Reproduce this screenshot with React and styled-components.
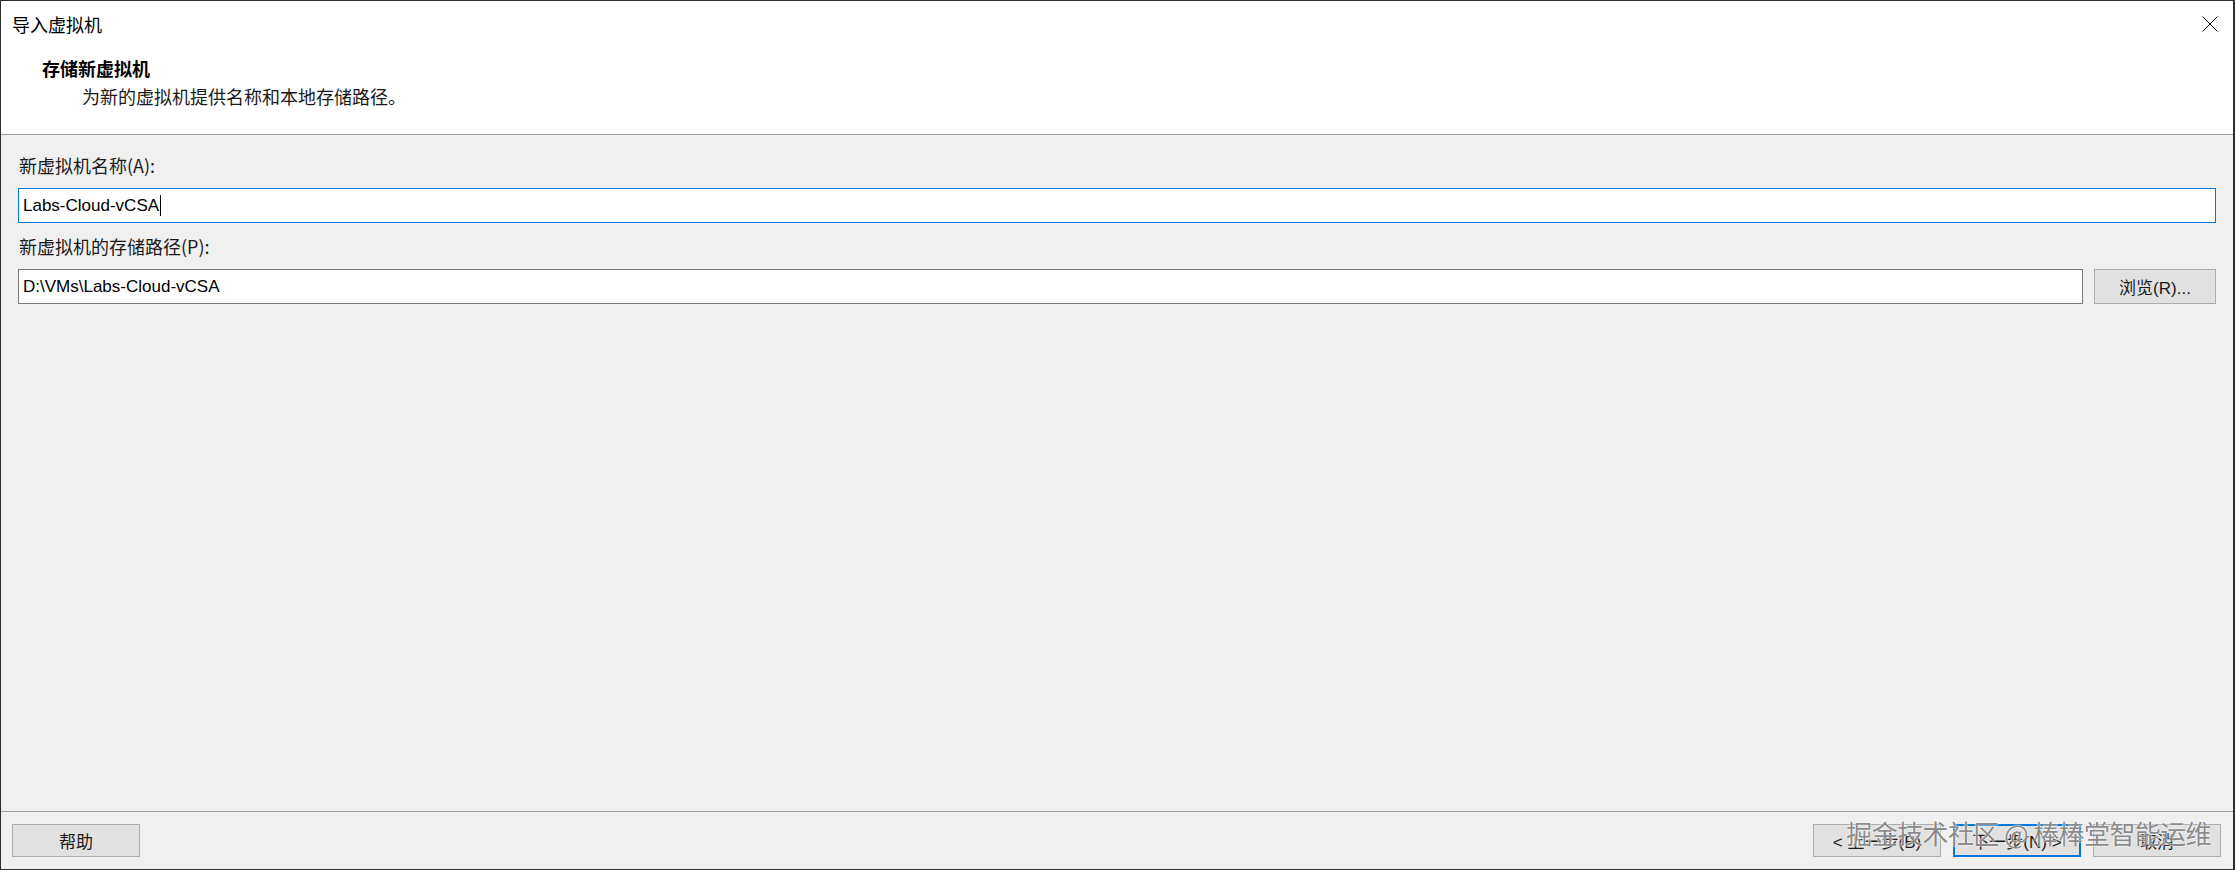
import React from "react";
import styled, { createGlobalStyle } from "styled-components";

const GlobalStyle = createGlobalStyle`
  * {
    box-sizing: border-box;
  }

  body {
    margin: 0;
    overflow: hidden;
    background: #ffffff;
    font-family: "Liberation Sans", "Noto Sans CJK SC", sans-serif;
  }
`;

const ImportWizard = () => {
  return (
    <>
      <GlobalStyle />
      <Window>
        <TitleBar>
          <Title>导入虚拟机</Title>
          <CloseButton aria-label="关闭">
            <svg width="16" height="16" viewBox="0 0 16 16">
              <path d="M0.5 0.5 L15.5 15.5 M15.5 0.5 L0.5 15.5" stroke="#000" strokeWidth="1" fill="none" />
            </svg>
          </CloseButton>
        </TitleBar>

        <Header>
          <Heading>存储新虚拟机</Heading>
          <SubHeading>为新的虚拟机提供名称和本地存储路径。</SubHeading>
        </Header>

        <Body>
          <Label>新虚拟机名称(A):</Label>
          <Field>
            <TextBox focused>
              Labs-Cloud-vCSA
              <Caret />
            </TextBox>
          </Field>

          <Label>新虚拟机的存储路径(P):</Label>
          <Field>
            <TextBox>D:\VMs\Labs-Cloud-vCSA</TextBox>
            <Button width="122px">浏览(R)...</Button>
          </Field>
        </Body>

        <Footer>
          <Button width="128px">帮助</Button>
          <ButtonGroup>
            <Button width="128px">&lt; 上一步(B)</Button>
            <Button width="128px" primary>
              下一步(N) &gt;
            </Button>
            <Button width="128px">取消</Button>
          </ButtonGroup>
        </Footer>

        <Watermark>掘金技术社区 @ 棒棒堂智能运维</Watermark>
      </Window>
    </>
  );
};

const Window = styled.div`
  position: relative;
  display: flex;
  flex-direction: column;
  width: 2235px;
  height: 870px;
  border-top: 1px solid #2d2d2d;
  border-left: 1px solid #2d2d2d;
  border-right: 2px solid #2d2d2d;
  border-bottom: 1px solid #2d2d2d;
  background: #f0f0f0;
  overflow: hidden;
`;

const TitleBar = styled.div`
  display: flex;
  align-items: center;
  justify-content: space-between;
  height: 46px;
  padding: 0 15px 0 11px;
  background: #ffffff;
`;

const Title = styled.div`
  font-family: "Noto Sans CJK SC", sans-serif;
  font-size: 18px;
  line-height: 24px;
  color: #000000;
`;

const CloseButton = styled.div`
  display: flex;
  width: 16px;
  height: 16px;
  margin-top: -1px;
`;

const Header = styled.div`
  display: flex;
  flex-direction: column;
  gap: 4px;
  padding: 9px 0 26px 41px;
  background: #ffffff;
  border-bottom: 1px solid #a0a0a0;
`;

const Heading = styled.div`
  font-family: "Noto Sans CJK SC", sans-serif;
  font-size: 18px;
  font-weight: 700;
  line-height: 24px;
  color: #000000;
`;

const SubHeading = styled.div`
  padding-left: 40px;
  font-family: "Noto Sans CJK SC", sans-serif;
  font-size: 18px;
  line-height: 24px;
  color: #1a1a1a;
`;

const Body = styled.div`
  flex: 1;
  display: flex;
  flex-direction: column;
  padding: 18px 17px 0 17px;
`;

const Label = styled.div`
  margin: 0 0 11px 1px;
  font-family: "Noto Sans CJK SC", sans-serif;
  font-size: 18px;
  line-height: 24px;
  color: #1a1a1a;
`;

const Field = styled.div`
  display: flex;
  gap: 11px;
  margin-bottom: 11px;
`;

const TextBox = styled.div`
  flex: 1;
  display: flex;
  align-items: center;
  height: 35px;
  padding: 0 4px;
  background: #ffffff;
  border: 1px solid ${(p) => (p.focused ? "#0078d7" : "#7a7a7a")};
  font-family: "Liberation Sans", sans-serif;
  font-size: 17px;
  color: #000000;
`;

const Caret = styled.span`
  display: inline-block;
  width: 1px;
  height: 21px;
  margin-left: 1px;
  background: #000000;
`;

const Button = styled.div`
  display: flex;
  align-items: center;
  justify-content: center;
  width: ${(p) => p.width};
  height: ${(p) => (p.primary ? "33px" : "35px")};
  background: #e1e1e1;
  border: ${(p) => (p.primary ? "2px solid #0078d7" : "1px solid #adadad")};
  font-family: "Liberation Sans", "Noto Sans CJK SC", sans-serif;
  font-size: 17px;
  color: #1a1a1a;
  white-space: nowrap;
`;

const Footer = styled.div`
  display: flex;
  align-items: flex-start;
  justify-content: space-between;
  height: 58px;
  padding: 12px 12px 0 11px;
  border-top: 1px solid #a0a0a0;

  ${Button} {
    height: 33px;
  }
`;

const ButtonGroup = styled.div`
  display: flex;
  gap: 12px;
`;

const Watermark = styled.div`
  position: absolute;
  right: 22px;
  bottom: 19px;
  font-family: "Noto Sans CJK SC", sans-serif;
  font-size: 26px;
  letter-spacing: -0.6px;
  line-height: 34px;
  color: rgba(100, 100, 100, 0.75);
  text-shadow: 0 0 2px #ffffff, 0 0 1px #ffffff;
  pointer-events: none;
  white-space: nowrap;
`;

export default ImportWizard;
